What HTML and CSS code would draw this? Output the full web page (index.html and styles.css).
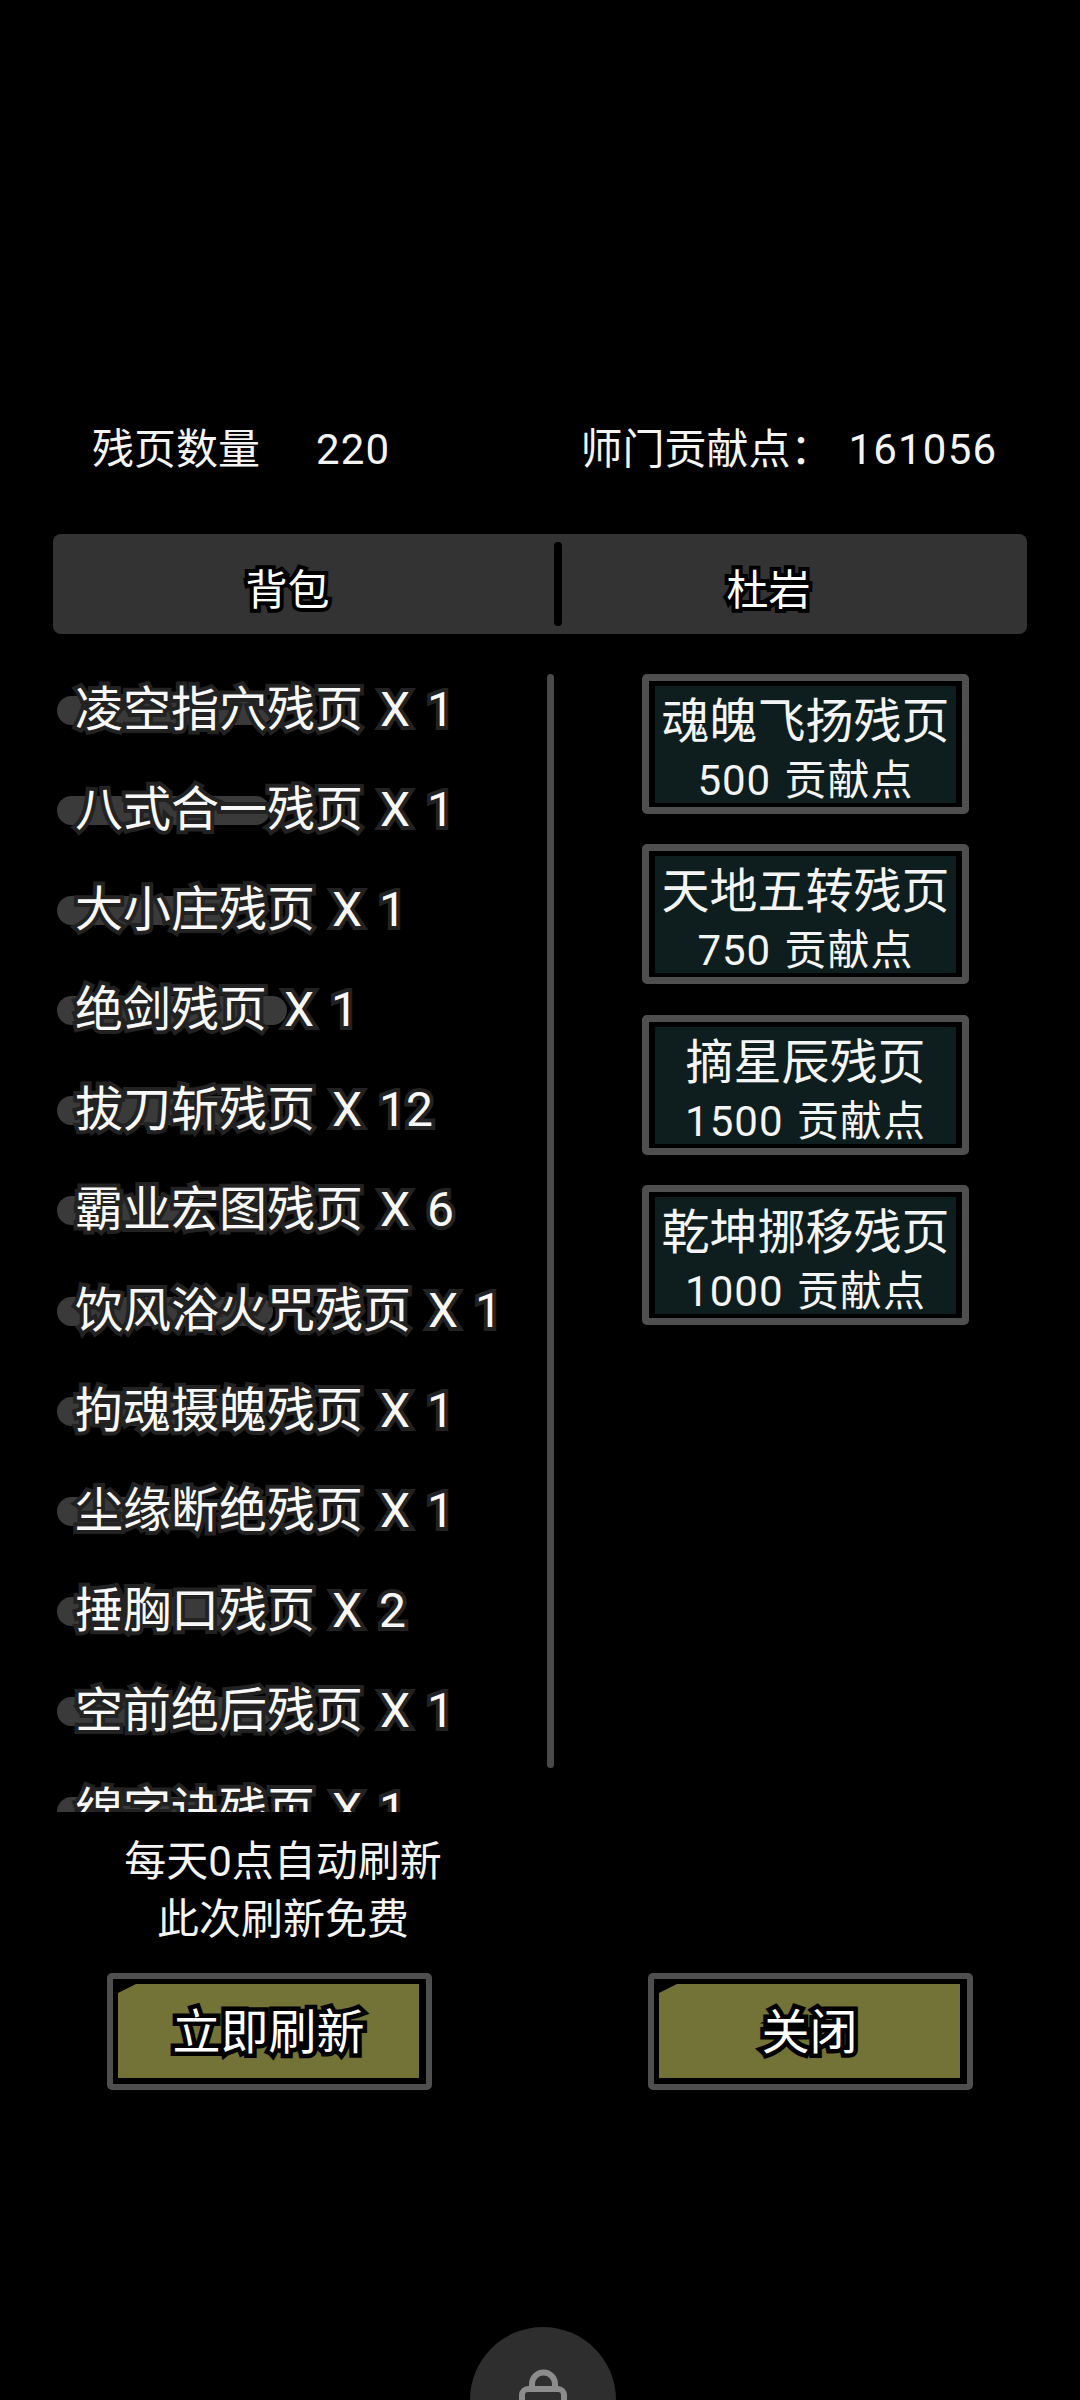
FILE: index.html
```html
<!DOCTYPE html>
<html lang="zh-CN">
<head>
<meta charset="utf-8">
<title>残页兑换</title>
<link rel="stylesheet" href="styles.css">
</head>
<body>
<main class="screen">
  <header class="stats">
    <div class="stat stat-left"><span>残页数量</span><span class="num">220</span></div>
    <div class="stat stat-right"><span>师门贡献点：</span><span class="num">161056</span></div>
  </header>
  <nav class="tabs">
    <div class="tab tab-left">背包</div>
    <div class="tab-divider"></div>
    <div class="tab tab-right">杜岩</div>
  </nav>
  <section class="content">
    <div class="list-wrap">
      <ul class="list">
        <li class="item" style="--pill:216px">凌空指穴残页 X 1</li>
        <li class="item" style="--pill:213px">八式合一残页 X 1</li>
        <li class="item" style="--pill:173px">大小庄残页 X 1</li>
        <li class="item" style="--pill:230px">绝剑残页 X 1</li>
        <li class="item" style="--pill:183px">拔刀斩残页 X 12</li>
        <li class="item" style="--pill:143px">霸业宏图残页 X 6</li>
        <li class="item" style="--pill:216px">饮风浴火咒残页 X 1</li>
        <li class="item" style="--pill:169px">拘魂摄魄残页 X 1</li>
        <li class="item" style="--pill:143px">尘缘断绝残页 X 1</li>
        <li class="item" style="--pill:176px">捶胸口残页 X 2</li>
        <li class="item" style="--pill:216px">空前绝后残页 X 1</li>
        <li class="item" style="--pill:160px">绵字诀残页 X 1</li>
      </ul>
      <div class="scrollbar"></div>
    </div>
    <div class="shop">
      <div class="card"><div class="card-inner"><div class="card-title">魂魄飞扬残页</div><div class="card-price">500 贡献点</div></div></div>
      <div class="card"><div class="card-inner"><div class="card-title">天地五转残页</div><div class="card-price">750 贡献点</div></div></div>
      <div class="card"><div class="card-inner"><div class="card-title">摘星辰残页</div><div class="card-price">1500 贡献点</div></div></div>
      <div class="card"><div class="card-inner"><div class="card-title">乾坤挪移残页</div><div class="card-price">1000 贡献点</div></div></div>
    </div>
  </section>
  <div class="notice">
    <p>每天0点自动刷新</p>
    <p>此次刷新免费</p>
  </div>
  <div class="actions">
    <div class="btn btn-refresh"><div class="btn-inner">立即刷新</div></div>
    <div class="btn btn-close"><div class="btn-inner">关闭</div></div>
  </div>
</main>
<div class="lock">
  <svg class="lock-icon" width="60" height="60" viewBox="0 0 60 60" fill="none" stroke="#8c8c8c" stroke-width="6">
    <path d="M19 22 V15 a11.500 11.500 0 0 1 23 0 V22"/>
    <rect x="9" y="20" width="42" height="36" rx="6"/>
  </svg>
</div>
</body>
</html>
```

FILE: styles.css
```css
* { box-sizing: border-box; }
html, body { margin: 0; padding: 0; background: #000; }
body {
  width: 1080px;
  height: 2400px;
  overflow: hidden;
  position: relative;
  color: #f4f4f4;
  font-family: Roboto, "Noto Sans CJK SC", sans-serif;
}
ul, p { margin: 0; padding: 0; list-style: none; }

.screen { padding-top: 418px; }

.stats {
  display: flex;
  height: 60px;
  font-size: 42px;
  line-height: 64px;
}
.stat { display: flex; }
.num { letter-spacing: 1.2px; }
.stat-left { margin-left: 92px; gap: 56px; }
.stat-right { margin-left: 190px; gap: 16px; }

.tabs {
  display: flex;
  align-items: center;
  margin: 56px 53px 0 53px;
  height: 100px;
  background: #333;
  border-radius: 8px;
}
.tab {
  font-size: 42px;
  line-height: 100px;
  padding-top: 14px;
  text-align: center;
  color: #fff;
  -webkit-text-stroke: 8px #000;
  paint-order: stroke fill;
}
.tab-left { width: 501px; padding-right: 32px; }
.tab-right { flex: 1; padding-right: 52px; }
.tab-divider { width: 8px; height: 84px; background: #000; border-radius: 4px; }

.content {
  display: flex;
  margin-top: 40px;
  height: 1138px;
}
.list-wrap {
  position: relative;
  width: 642px;
  height: 1138px;
  overflow: hidden;
}
.list { padding-left: 57px; }
.item {
  position: relative;
  isolation: isolate;
  height: 100.1px;
  padding-left: 18px;
  font-size: 48px;
  line-height: 72px;
  word-spacing: 5px;
  white-space: nowrap;
  color: #f8f8f8;
  -webkit-text-stroke: 8px #222;
  paint-order: stroke fill;
}
.item::before {
  content: "";
  position: absolute;
  left: 0;
  top: 22px;
  width: var(--pill);
  height: 29px;
  border-radius: 15px;
  background: #3a3a3a;
  z-index: -1;
}
.scrollbar {
  position: absolute;
  left: 547px;
  top: 0;
  width: 7px;
  height: 1094px;
  background: #4a4a4a;
  border-radius: 4px;
}

.shop {
  display: flex;
  flex-direction: column;
  gap: 30.4px;
}
.card {
  width: 327px;
  height: 140px;
  border: 7px solid #4f4f4f;
  border-radius: 5px;
  background: #000;
  padding: 5px 6px 4px 6px;
}
.card-inner {
  height: 100%;
  background: #0e1e1e;
  text-align: center;
  white-space: nowrap;
}
.card-title {
  font-size: 48px;
  line-height: 71px;
  height: 62px;
}
.card-price {
  font-size: 42px;
  line-height: 65px;
  letter-spacing: 1px;
  word-spacing: 2px;
}

.notice {
  margin-top: 21px;
  width: 566px;
  text-align: center;
  font-size: 42px;
  line-height: 58px;
}

.actions {
  display: flex;
  margin-top: 24px;
  padding-left: 107px;
  gap: 216px;
}
.btn {
  width: 325px;
  height: 117px;
  border: 6px solid #4f4f4f;
  border-radius: 5px;
  padding: 5px 7px 6px 5px;
  background: #000;
}
.btn-inner {
  height: 100%;
  background: #737337;
  clip-path: polygon(18px 0, 100% 0, 100% 100%, 0 100%, 0 9px);
  text-align: center;
  font-size: 48px;
  line-height: 98px;
  color: #fff;
  -webkit-text-stroke: 9px #000;
  paint-order: stroke fill;
}

.lock {
  position: absolute;
  left: 470px;
  top: 2327px;
  width: 146px;
  height: 146px;
  border-radius: 50%;
  background: #2e2e2e;
}
.lock-icon { position: absolute; left: 43px; top: 42px; }
```
